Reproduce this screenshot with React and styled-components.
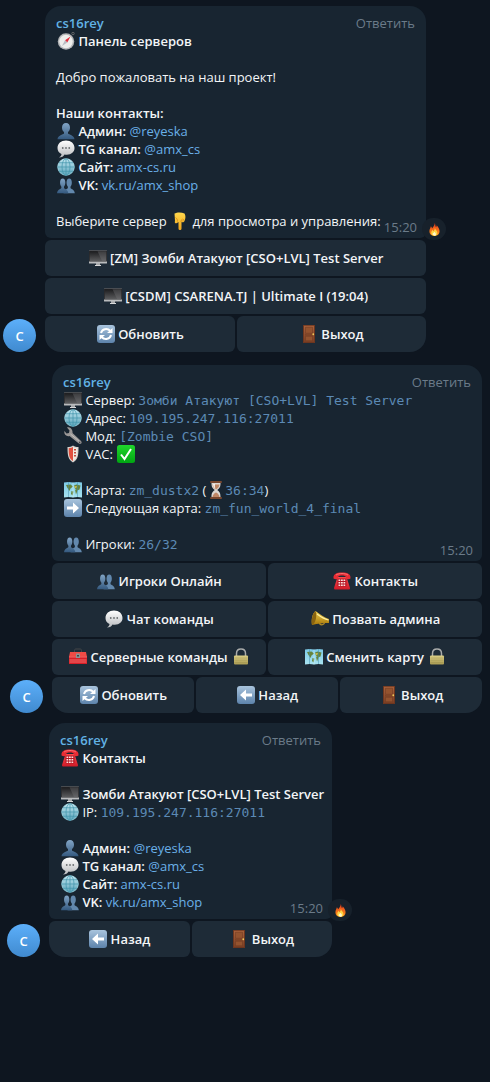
import React from "react";
import styled, { createGlobalStyle } from "styled-components";

const Global = createGlobalStyle`
  body {
    margin: 0;
    background: #0e1620;
    color: #f3f5f7;
    font: 400 13px/18px "Open Sans", "Noto Sans", sans-serif;
  }
  button { font: inherit; color: inherit; border: 0; padding: 0; cursor: pointer; }
`;

const Chat = styled.main`
  display: flex;
  flex-direction: column;
  min-height: 100vh;
  box-sizing: border-box;
  padding: 6px 8px 24px 0;
`;

const Message = styled.article`
  display: flex;
  align-items: flex-end;
  gap: 9px;
  padding-left: ${(p) => p.$indent}px;
  margin-bottom: ${(p) => p.$gap}px;
`;

const Avatar = styled.div`
  flex: none;
  width: 33px;
  height: 33px;
  border-radius: 50%;
  background: linear-gradient(#5caffa, #408acf);
  color: #fff;
  text-align: center;
  line-height: 34px;
  font-weight: 600;
`;

const Column = styled.div`
  flex: 1;
  min-width: 0;
  max-width: ${(p) => p.$max}px;
  display: flex;
  flex-direction: column;
  gap: 2px;
`;

const Bubble = styled.div`
  position: relative;
  background: #182531;
  border-radius: 16px 16px 6px 6px;
  padding: 8px 9px 2px 11px;
`;

const Header = styled.header`
  display: flex;
  justify-content: space-between;
  padding-right: 2px;
`;

const Author = styled.span`
  color: #62b2e5;
  font-weight: 600;
`;

const Reply = styled.button`
  background: none;
  && { color: #6b7b89; }
`;

const Line = styled.div`
  min-height: 18px;
  white-space: nowrap;
`;

const Footer = styled.footer`
  display: flex;
  justify-content: space-between;
  align-items: flex-end;
`;

const LastLine = styled(Line)`
  padding-bottom: 6px;
`;

const Time = styled.time`
  color: #6b7b89;
`;

const Bold = styled.b`
  font-weight: 600;
`;

const Link = styled.a`
  color: #6ab0e8;
  text-decoration: none;
`;

const Code = styled.code`
  color: #5c8ab5;
  font: 400 13px/13px "DejaVu Sans Mono", "Liberation Mono", monospace;
`;

const Reaction = styled.button`
  position: absolute;
  right: -20px;
  bottom: -2px;
  width: 24px;
  height: 22px;
  border-radius: 11px;
  background: #17212b;
  display: flex;
  align-items: center;
  justify-content: center;
`;

const Keyboard = styled.div`
  display: flex;
  flex-direction: column;
  gap: 2px;
  border-radius: 0 0 16px 16px;
  overflow: hidden;
`;

const KeyRow = styled.div`
  display: flex;
  gap: 2px;
`;

const Key = styled.button`
  flex: 1 1 0;
  min-width: 0;
  height: 36px;
  background: #1e2b37;
  border-radius: 6px;
  white-space: nowrap;
  && { font-weight: 600; }
`;

const Glyph = styled.svg`
  width: ${(p) => p.$size}px;
  height: ${(p) => p.$size}px;
  margin-left: 1px;
  vertical-align: top;
`;

const Defs = styled.svg`
  position: absolute;
  width: 0;
  height: 0;
`;

const gradients = {
  bust: ["#82a5c6", "#34597f"],
  tile: ["#a9c4dd", "#5d83ab"],
  globe: ["#c3e7f2", "#5ba4ba"],
  silver: ["#ffffff", "#b9bbbe"],
  green: ["#20d62c", "#00a512"],
  gold: ["#f0d050", "#a87809"],
  skin: ["#ffd84d", "#f0a51c"],
  red: ["#ff4a4d", "#cf1b28"],
  wood: ["#a9613b", "#7c3f24"],
  screen: ["#1c1c1e", "#5a5b5d"],
  flame: ["#e6371a", "#ff9d1c"],
  lock: ["#dccf86", "#aa9b52"],
  sea: ["#7cc9e6", "#a9e3f0"],
};

const url = (n) => `url(#g-${n})`;

const person = (
  <path d="M18 2c-5 0-8 3.500-8 9 0 4 1.500 7 4 9v3c-2 2.500-12 3-13 11.500h34C34 26 24 25.500 22 23v-3c2.500-2 4-5 4-9 0-5.500-3-9-8-9z" />
);

const arrow = <path d="M6 15h12V7l12 11-12 11v-8H6z" fill="#fff" />;

const icons = {
  compass: (
    <>
      <circle cx="32" cy="3" r="2.500" fill="none" stroke="#777" strokeWidth="1.500" />
      <circle cx="18" cy="19" r="16.500" fill="#b4b6b8" />
      <circle cx="18" cy="19" r="13.500" fill="#eeeeec" />
      <path d="M27 9L16 16.500l4.500 4.500z" fill="#e02d3c" />
      <path d="M10 28l6-11.500 4.500 4.500z" fill="#b9bdc2" />
    </>
  ),
  person: <g fill={url("bust")}>{person}</g>,
  people: (
    <>
      <g transform="translate(12.500 3) scale(.66 .92)" fill="#6288ad">{person}</g>
      <g transform="translate(-.5 3) scale(.66 .92)" fill={url("bust")}>{person}</g>
    </>
  ),
  speech: (
    <>
      <path d="M18 1C8 1 1 7 1 16c0 6 3 10 8 12 0 3-2 5-5 7 6 0 9-2 11-6 12 2 20-4 20-13 0-9-7-15-17-15z" fill={url("silver")} />
      <g fill="#6c6f72">
        <circle cx="11.500" cy="16" r="1.800" />
        <circle cx="18" cy="16" r="1.800" />
        <circle cx="24.500" cy="16" r="1.800" />
      </g>
    </>
  ),
  globe: (
    <>
      <circle cx="18" cy="18" r="17" fill={url("globe")} />
      <g fill="none" stroke="#3f93ab" strokeWidth="1.400">
        <circle cx="18" cy="18" r="16.500" stroke="#9bd0dd" />
        <ellipse cx="18" cy="18" rx="8" ry="16.500" />
        <path d="M18 1v34M1 18h34M4 9.500h28M4 26.500h28" />
      </g>
    </>
  ),
  down: (
    <>
      <path d="M7 3c5-3 14-3 20 0 3 5 2 11 0 15-1 3-4 3-6 2v13c0 4-6 4-6 0V20l-3 2c-4 2-5-1-4-4z" fill={url("skin")} />
      <path d="M20 20c0-3 1-5 3-6M24 19c0-3 1-4 2-5M13 19c0-4-1-6-4-8" fill="none" stroke="#cf8412" strokeWidth="1.500" />
    </>
  ),
  desktop: (
    <>
      <path d="M14 28h8v5h-8z" fill="#a5a7a9" />
      <path d="M12 32h12v2H12z" fill="#d7d8d9" />
      <rect x="0" y="3" width="36" height="26" rx="1" fill="#b9bbbd" />
      <rect x="0" y="3" width="36" height="22" rx="1" fill="#29292b" />
      <rect x="1.500" y="4.500" width="33" height="19.500" fill={url("screen")} />
      <path d="M34.500 4.500V24H26L17 4.500z" fill="#77797b" opacity=".35" />
    </>
  ),
  refresh: (
    <>
      <rect width="36" height="36" rx="6" fill={url("tile")} />
      <g fill="none" stroke="#fff" strokeWidth="4">
        <path d="M8 16c2-8 12-11 19-4" />
        <path d="M28 20c-2 8-12 11-19 4" />
      </g>
      <path d="M20 16h11V6zM16 20H5v10z" fill="#fff" />
    </>
  ),
  door: (
    <>
      <path d="M6 0h24v36H6z" fill="#6d361f" />
      <path d="M8 1.500h20V34H8z" fill={url("wood")} />
      <g fill="#94532f" stroke="#6c3a22" strokeWidth="1">
        <path d="M11 4.500h14v12H11zM11 22.500h14v9H11z" />
        <path d="M11 18.500h14v2H11z" />
      </g>
      <circle cx="26.500" cy="18.500" r="1.800" fill="#f0cb5a" />
    </>
  ),
  wrench: (
    <>
      <path d="M6 1l5 6-1 5-5 1-4-5C-1 15 5 20 11 18l18 14.500c5 3 8-1 5-4.500L17 12C18 5 12-1 6 1z" fill="#9b9897" />
      <path d="M13 14l18 15" stroke="#d0cdca" strokeWidth="1.500" />
      <circle cx="31.500" cy="30.500" r="1.300" fill="#333" />
    </>
  ),
  shield: (
    <>
      <path d="M18 1c-3 2-7 3-11 3 0 17 1 25 11 31C28 29 29 21 29 4c-4 0-8-1-11-3z" fill="#d8d4cf" />
      <path d="M18 4c-3 2-5 2-8.500 2.500C9.500 20 10 27 18 32z" fill="#e0503f" />
      <path d="M18 4c3 2 5 2 8.500 2.500C26.500 20 26 27 18 32z" fill="#f0e9df" />
      <path d="M20 8h4v3h-4zM20 14h4v3h-4zM20 20h4v3h-4z" fill="#c4493d" />
    </>
  ),
  check: (
    <>
      <rect width="36" height="36" rx="5" fill={url("green")} />
      <path d="M8 19l7 9L28 8" fill="none" stroke="#fff" strokeWidth="4" />
    </>
  ),
  map: (
    <>
      <path d="M0 3l9-1 9 1 9-1 9 1v30l-9-1-9 1-9-1-9 1z" fill={url("sea")} />
      <path d="M4 8l9-1 5 4-5 4-2 5-4-6zM15 20l4 1-2 8-3-3zM20 9l5-2 8 2-2 8-5 2-4-4zM22 17l5 2-3 8z" fill="#66843c" />
      <path d="M20 11l6-1-2 5z" fill="#d7c553" />
      <path d="M9 2v30M27 2v30" stroke="#438da9" strokeWidth="1" />
      <path d="M18 3v30" stroke="#dcf5fb" strokeWidth="1" />
    </>
  ),
  hourglass: (
    <>
      <path d="M9 4h18c0 7-1 10-6.500 14C26 22 27 25 27 32H9c0-7 1-10 6.500-14C10 14 9 11 9 4z" fill="#dcd7d3" />
      <path d="M11 7h14c-1 5-3 7-7 10-4-3-6-5-7-10zM11 32c1-5 4-8 7-9 3 1 6 4 7 9z" fill="#bf8767" />
      <path d="M12 6h4c0 5 0 7 1 10-4-3-5-6-5-10z" fill="#fff" opacity=".8" />
      <rect x="6" y="0" width="24" height="4" rx="2" fill="#79472f" />
      <rect x="6" y="32" width="24" height="4" rx="2" fill="#79472f" />
    </>
  ),
  right: (
    <>
      <rect width="36" height="36" rx="6" fill={url("tile")} />
      {arrow}
    </>
  ),
  left: (
    <>
      <rect width="36" height="36" rx="6" fill={url("tile")} />
      <g transform="matrix(-1 0 0 1 36 0)">{arrow}</g>
    </>
  ),
  phone: (
    <>
      <path d="M9 10h18l7 22c0 2-1 3-3 3H5c-2 0-3-1-3-3z" fill={url("red")} />
      <path d="M1 13C0 3 8 1 18 1s18 2 17 12c-3 2-7 2-9 0 0-4-1-6-8-6s-8 2-8 6c-2 2-6 2-9 0z" fill="#e82c34" />
      <path d="M6 6c7-4 17-4 24 0" stroke="#ff8585" strokeWidth="1.500" fill="none" />
      <rect x="9" y="13" width="18" height="16" rx="2" fill="#b41422" />
      <g fill="#ffe1df">
        {[15, 20, 25].map((y) => [11, 16, 21].map((x) => <rect key={`${x}-${y}`} x={x} y={y} width="3.500" height="3" />))}
      </g>
    </>
  ),
  megaphone: (
    <>
      <path d="M17 25c0 6 9 6 10 0" fill="none" stroke="#b08a25" strokeWidth="2.500" />
      <path d="M9 2c8 6 17 13 27 16v8c-11 0-22 1-34 4C0 22 2 7 9 2z" fill={url("gold")} />
      <path d="M9 2C3 6 0 20 2 30c7-2 11-20 7-28z" fill="#8a6410" />
      <path d="M12 8c8 6 15 10 23 12" stroke="#fff0a2" strokeWidth="2.500" fill="none" />
    </>
  ),
  toolbox: (
    <>
      <path d="M11 9V5c0-2 1-3 3-3h8c2 0 3 1 3 3v4" fill="none" stroke="#454749" strokeWidth="2" />
      <path d="M2 8h32l2 10H0z" fill="#f04b45" />
      <rect x="0" y="17" width="36" height="15" rx="1" fill="#d71f28" />
      <path d="M0 18h36M1 24h34M1 28h34" stroke="#ff9890" strokeWidth="1.300" />
      <rect x="14" y="11" width="8" height="9" rx="1" fill="#8f9294" />
      <path d="M16 14h4v3h-4z" fill="#444" />
    </>
  ),
  lock: (
    <>
      <path d="M9 17V11C9 5 12 2 18 2s9 3 9 9v6" fill="none" stroke="#a9abaa" strokeWidth="3" />
      <rect x="4" y="15" width="28" height="18" rx="2" fill={url("lock")} />
      <path d="M5 20h26M5 24.500h26M5 29h26" stroke="#8f8244" strokeWidth="1" opacity=".6" />
    </>
  ),
  fire: (
    <>
      <path d="M19 0c2 6 1 8 3 11 2-1 2-3 2-5 5 5 8 11 8 17 0 8-6 13-14 13S4 31 4 23c0-6 3-9 4-14 2 2 3 4 3 6 4-4 7-8 8-15z" fill={url("flame")} />
      <path d="M19 13c1 6 7 8 7 15 0 5-3 8-8 8s-9-3-9-8c0-4 2-6 4-9 0 2 1 3 2 4 3-3 4-6 4-10z" fill="#ffd545" />
      <path d="M18 24c2 3 4 4 4 7s-2 4-4 4-5-1-5-4 3-4 5-7z" fill="#fff8cc" />
    </>
  ),
};

function Emoji({ name, size = 18 }) {
  return (
    <Glyph viewBox="0 0 36 36" $size={size} aria-hidden="true">
      {icons[name]}
    </Glyph>
  );
}

function Post({ indent, max, gap, lines, last, keys, reaction }) {
  return (
    <Message $indent={indent} $gap={gap}>
      <Avatar aria-hidden="true">C</Avatar>
      <Column $max={max}>
        <Bubble>
          <Header>
            <Author>cs16rey</Author>
            <Reply type="button">Ответить</Reply>
          </Header>
          {lines.map((line, i) => (
            <Line key={i}>{line}</Line>
          ))}
          <Footer>
            <LastLine>{last}</LastLine>
            <Time>15:20</Time>
          </Footer>
          {reaction && (
            <Reaction type="button" aria-label="Огонь">
              <Emoji name="fire" size={13} />
            </Reaction>
          )}
        </Bubble>
        <Keyboard>
          {keys.map((row, i) => (
            <KeyRow key={i}>
              {row.map(([icon, label, tail]) => (
                <Key type="button" key={label}>
                  <Emoji name={icon} /> {label}
                  {tail && <> <Emoji name={tail} /></>}
                </Key>
              ))}
            </KeyRow>
          ))}
        </Keyboard>
      </Column>
    </Message>
  );
}

const contacts = [
  <><Emoji name="person" /> <Bold>Админ:</Bold> <Link href="#reyeska">@reyeska</Link></>,
  <><Emoji name="speech" /> <Bold>TG канал:</Bold> <Link href="#amx_cs">@amx_cs</Link></>,
  <><Emoji name="globe" /> <Bold>Сайт:</Bold> <Link href="#site">amx-cs.ru</Link></>,
];

const vk = <><Emoji name="people" /> <Bold>VK:</Bold> <Link href="#vk">vk.ru/amx_shop</Link></>;

const posts = [
  {
    indent: 3,
    max: 381,
    gap: 13,
    reaction: true,
    lines: [
      <><Emoji name="compass" /> <Bold>Панель серверов</Bold></>,
      null,
      "Добро пожаловать на наш проект!",
      null,
      <Bold>Наши контакты:</Bold>,
      ...contacts,
      vk,
      null,
    ],
    last: <>Выберите сервер <Emoji name="down" /> для просмотра и управления:</>,
    keys: [
      [["desktop", "[ZM] Зомби Атакуют [CSO+LVL] Test Server"]],
      [["desktop", "[CSDM] CSARENA.TJ | Ultimate I (19:04)"]],
      [["refresh", "Обновить"], ["door", "Выход"]],
    ],
  },
  {
    indent: 10,
    max: 430,
    gap: 10,
    lines: [
      <><Emoji name="desktop" /> Сервер: <Code>Зомби Атакуют [CSO+LVL] Test Server</Code></>,
      <><Emoji name="globe" /> Адрес: <Code>109.195.247.116:27011</Code></>,
      <><Emoji name="wrench" /> Мод: <Code>[Zombie CSO]</Code></>,
      <><Emoji name="shield" /> VAC: <Emoji name="check" /></>,
      null,
      <><Emoji name="map" /> Карта: <Code>zm_dustx2</Code> (<Emoji name="hourglass" /><Code>36:34</Code>)</>,
      <><Emoji name="right" /> Следующая карта: <Code>zm_fun_world_4_final</Code></>,
      null,
    ],
    last: <><Emoji name="people" /> Игроки: <Code>26/32</Code></>,
    keys: [
      [["people", "Игроки Онлайн"], ["phone", "Контакты"]],
      [["speech", "Чат команды"], ["megaphone", "Позвать админа"]],
      [["toolbox", "Серверные команды", "lock"], ["map", "Сменить карту", "lock"]],
      [["refresh", "Обновить"], ["left", "Назад"], ["door", "Выход"]],
    ],
  },
  {
    indent: 7,
    max: 283,
    gap: 0,
    reaction: true,
    lines: [
      <><Emoji name="phone" /> <Bold>Контакты</Bold></>,
      null,
      <><Emoji name="desktop" /> <Bold>Зомби Атакуют [CSO+LVL] Test Server</Bold></>,
      <><Emoji name="globe" /> IP: <Code>109.195.247.116:27011</Code></>,
      null,
      ...contacts,
    ],
    last: vk,
    keys: [[["left", "Назад"], ["door", "Выход"]]],
  },
];

export default function App() {
  return (
    <>
      <Global />
      <Defs aria-hidden="true">
        <defs>
          {Object.entries(gradients).map(([id, [from, to]]) => (
            <linearGradient key={id} id={`g-${id}`} x1="0" y1="0" x2="0" y2="1">
              <stop offset="0" stopColor={from} />
              <stop offset="1" stopColor={to} />
            </linearGradient>
          ))}
        </defs>
      </Defs>
      <Chat>
        {posts.map((post) => (
          <Post key={post.indent} {...post} />
        ))}
      </Chat>
    </>
  );
}
